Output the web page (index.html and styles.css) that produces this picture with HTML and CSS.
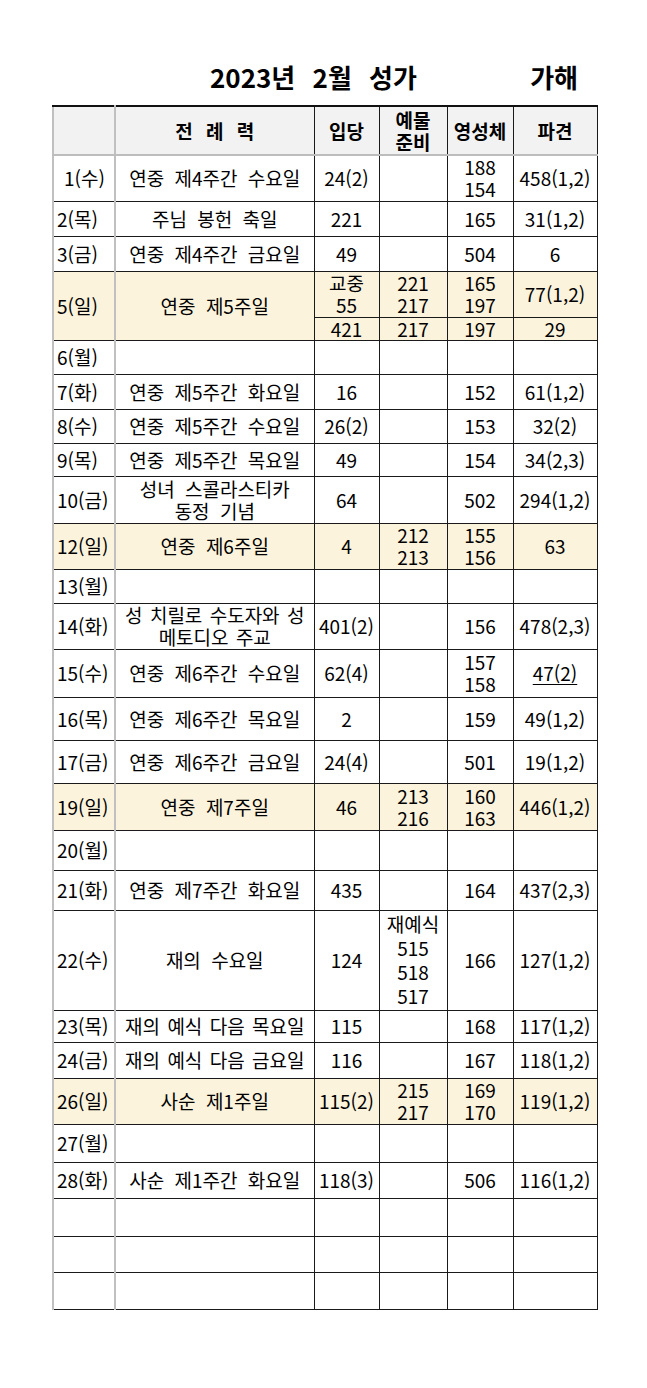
FILE: index.html
```html
<!DOCTYPE html>
<html lang="ko">
<head>
<meta charset="utf-8">
<title>2023년 2월 성가</title>
<link rel="stylesheet" href="styles.css">
</head>
<body>
<div class="page">
  <div class="title-row">
    <h1 class="title">2023년 2월 성가</h1>
    <span class="cycle">가해</span>
  </div>
  <table class="chart">
    <colgroup>
      <col class="c-day"><col class="c-lit"><col class="c-ent"><col class="c-off"><col class="c-com"><col class="c-dis">
    </colgroup>
    <thead>
      <tr class="h49 hdr">
        <th class="day"></th><th class="spaced">전 례 력</th><th>입당</th><th>예물<br>준비</th><th>영성체</th><th>파견</th>
      </tr>
    </thead>
    <tbody>
      <tr class="h46"><td class="day indent">1(수)</td><td>연중 제4주간 수요일</td><td>24(2)</td><td></td><td>188<br>154</td><td>458(1,2)</td></tr>
      <tr class="h35"><td class="day">2(목)</td><td>주님 봉헌 축일</td><td>221</td><td></td><td>165</td><td>31(1,2)</td></tr>
      <tr class="h35"><td class="day">3(금)</td><td>연중 제4주간 금요일</td><td>49</td><td></td><td>504</td><td>6</td></tr>
      <tr class="h46 sun"><td class="day" rowspan="2">5(일)</td><td rowspan="2">연중 제5주일</td><td>교중<br>55</td><td>221<br>217</td><td>165<br>197</td><td>77(1,2)</td></tr>
      <tr class="h23 sun"><td>421</td><td>217</td><td>197</td><td>29</td></tr>
      <tr class="h34"><td class="day">6(월)</td><td></td><td></td><td></td><td></td><td></td></tr>
      <tr class="h35"><td class="day">7(화)</td><td>연중 제5주간 화요일</td><td>16</td><td></td><td>152</td><td>61(1,2)</td></tr>
      <tr class="h34"><td class="day">8(수)</td><td>연중 제5주간 수요일</td><td>26(2)</td><td></td><td>153</td><td>32(2)</td></tr>
      <tr class="h33"><td class="day">9(목)</td><td>연중 제5주간 목요일</td><td>49</td><td></td><td>154</td><td>34(2,3)</td></tr>
      <tr class="h47"><td class="day">10(금)</td><td>성녀 스콜라스티카<br>동정 기념</td><td>64</td><td></td><td>502</td><td>294(1,2)</td></tr>
      <tr class="h46 sun"><td class="day">12(일)</td><td>연중 제6주일</td><td>4</td><td>212<br>213</td><td>155<br>156</td><td>63</td></tr>
      <tr class="h34"><td class="day">13(월)</td><td></td><td></td><td></td><td></td><td></td></tr>
      <tr class="h46"><td class="day">14(화)</td><td class="tight">성 치릴로 수도자와 성<br>메토디오 주교</td><td>401(2)</td><td></td><td>156</td><td>478(2,3)</td></tr>
      <tr class="h48"><td class="day">15(수)</td><td>연중 제6주간 수요일</td><td>62(4)</td><td></td><td>157<br>158</td><td><u>47(2)</u></td></tr>
      <tr class="h43"><td class="day">16(목)</td><td>연중 제6주간 목요일</td><td>2</td><td></td><td>159</td><td>49(1,2)</td></tr>
      <tr class="h43"><td class="day">17(금)</td><td>연중 제6주간 금요일</td><td>24(4)</td><td></td><td>501</td><td>19(1,2)</td></tr>
      <tr class="h47 sun"><td class="day">19(일)</td><td>연중 제7주일</td><td>46</td><td>213<br>216</td><td>160<br>163</td><td>446(1,2)</td></tr>
      <tr class="h40"><td class="day">20(월)</td><td></td><td></td><td></td><td></td><td></td></tr>
      <tr class="h40"><td class="day">21(화)</td><td>연중 제7주간 화요일</td><td>435</td><td></td><td>164</td><td>437(2,3)</td></tr>
      <tr class="h100"><td class="day">22(수)</td><td>재의 수요일</td><td>124</td><td class="tall">재예식<br>515<br>518<br>517</td><td>166</td><td>127(1,2)</td></tr>
      <tr class="h32"><td class="day">23(목)</td><td class="tight">재의 예식 다음 목요일</td><td>115</td><td></td><td>168</td><td>117(1,2)</td></tr>
      <tr class="h36"><td class="day">24(금)</td><td class="tight">재의 예식 다음 금요일</td><td>116</td><td></td><td>167</td><td>118(1,2)</td></tr>
      <tr class="h46 sun"><td class="day">26(일)</td><td>사순 제1주일</td><td>115(2)</td><td>215<br>217</td><td>169<br>170</td><td>119(1,2)</td></tr>
      <tr class="h38"><td class="day">27(월)</td><td></td><td></td><td></td><td></td><td></td></tr>
      <tr class="h36"><td class="day">28(화)</td><td>사순 제1주간 화요일</td><td>118(3)</td><td></td><td>506</td><td>116(1,2)</td></tr>
      <tr class="h38"><td class="day"></td><td></td><td></td><td></td><td></td><td></td></tr>
      <tr class="h36"><td class="day"></td><td></td><td></td><td></td><td></td><td></td></tr>
      <tr class="h37"><td class="day"></td><td></td><td></td><td></td><td></td><td></td></tr>
    </tbody>
  </table>
</div>
</body>
</html>
```
FILE: styles.css
```css
html, body {
  margin: 0;
  padding: 0;
  background: #ffffff;
}

body {
  font-family: "Noto Sans CJK KR", "Noto Sans", sans-serif;
  color: #000000;
}

.page {
  width: 647px;
  height: 1388px;
  box-sizing: border-box;
}

.title-row {
  display: flex;
  align-items: flex-start;
  height: 105px;
  box-sizing: border-box;
  padding: 61px 69px 0 210px;
}

.title {
  margin: 0;
  font-size: 26px;
  line-height: 32px;
  font-weight: 700;
  word-spacing: 10px;
}

.cycle {
  margin-left: auto;
  font-size: 26px;
  line-height: 32px;
  font-weight: 700;
}

.chart {
  margin-left: 52px;
  width: 544px;
  border-collapse: collapse;
  table-layout: fixed;
  font-size: 19px;
  line-height: 22px;
}

.c-day { width: 62px; }
.c-lit { width: 199px; }
.c-ent { width: 65px; }
.c-off { width: 68px; }
.c-com { width: 66px; }
.c-dis { width: 84px; }

.chart th,
.chart td {
  border: 1px solid #1a1a1a;
  padding: 0;
  text-align: center;
  vertical-align: middle;
  white-space: nowrap;
  word-spacing: 5px;
}

.chart td.tight {
  word-spacing: 2px;
}

.chart th {
  font-weight: 700;
  background: #f2f2f2;
  line-height: 22px;
}

.chart th.spaced {
  word-spacing: 8px;
}

.chart thead th {
  border-top: 2px solid #111111;
  border-bottom: 2px solid #bdbdbd;
}

.chart .day {
  text-align: left;
  padding-left: 3px;
  border-left: 2px solid #c0c0c0;
  border-right: 2px solid #c0c0c0;
  word-spacing: 0;
}

.chart .indent {
  padding-left: 10px;
}

.chart tr.sun td {
  background: #fbf3dc;
}

.chart td.tall {
  line-height: 24px;
}

.chart u {
  text-underline-offset: 3px;
}

.h23 { height: 23px; }
.h32 { height: 32px; }
.h33 { height: 33px; }
.h34 { height: 34px; }
.h35 { height: 35px; }
.h36 { height: 36px; }
.h37 { height: 37px; }
.h38 { height: 38px; }
.h40 { height: 40px; }
.h43 { height: 43px; }
.h46 { height: 46px; }
.h47 { height: 47px; }
.h48 { height: 48px; }
.h49 { height: 49px; }
.h100 { height: 100px; }
```
